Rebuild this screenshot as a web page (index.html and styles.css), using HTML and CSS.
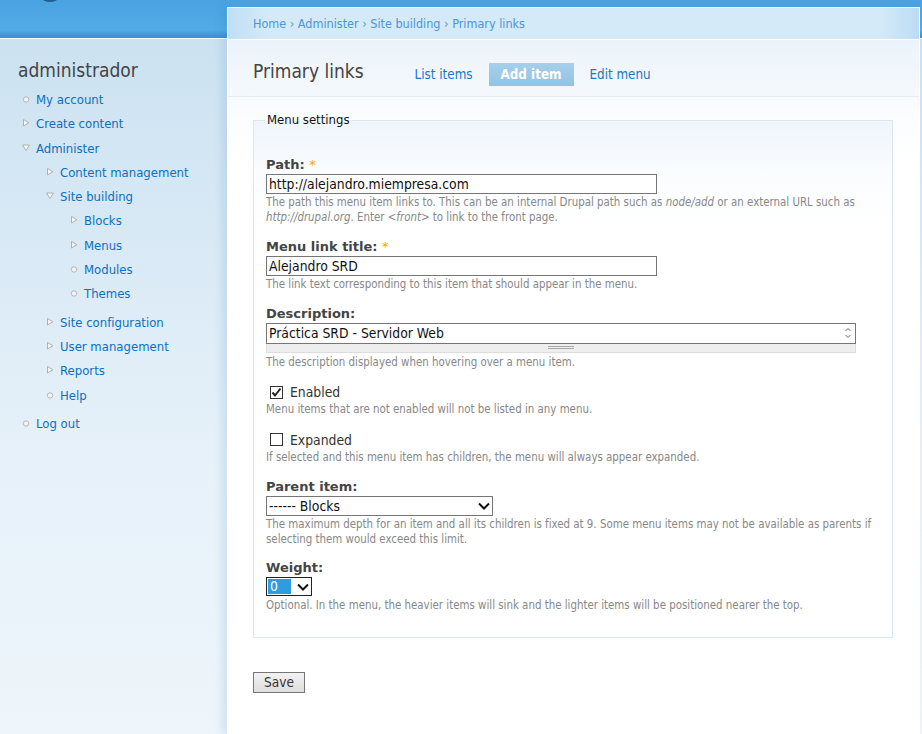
FILE: index.html
```html
<!DOCTYPE html>
<html lang="es">
<head>
<meta charset="utf-8">
<title>Primary links</title>
<link rel="stylesheet" href="styles.css">
</head>
<body>
<div class="logo-bit"></div>
<div class="page">
  <aside class="sidebar">
    <h2 class="user">administrador</h2>
    <ul class="menu">
      <li class="leaf"><a href="#">My account</a></li>
      <li class="collapsed"><a href="#">Create content</a></li>
      <li class="expanded"><a href="#">Administer</a>
        <ul class="menu">
          <li class="collapsed"><a href="#">Content management</a></li>
          <li class="expanded"><a href="#">Site building</a>
            <ul class="menu">
              <li class="collapsed"><a href="#">Blocks</a></li>
              <li class="collapsed"><a href="#">Menus</a></li>
              <li class="leaf"><a href="#">Modules</a></li>
              <li class="leaf"><a href="#">Themes</a></li>
            </ul>
          </li>
          <li class="collapsed"><a href="#">Site configuration</a></li>
          <li class="collapsed"><a href="#">User management</a></li>
          <li class="collapsed"><a href="#">Reports</a></li>
          <li class="leaf"><a href="#">Help</a></li>
        </ul>
      </li>
      <li class="leaf"><a href="#">Log out</a></li>
    </ul>
  </aside>
  <main class="panel">
    <div class="breadcrumb"><a href="#">Home</a> › <a href="#">Administer</a> › <a href="#">Site building</a> › <a href="#">Primary links</a></div>
    <div class="titlebar">
      <h1 class="title">Primary links</h1>
      <ul class="tabs">
        <li><a href="#">List items</a></li>
        <li class="active"><a href="#">Add item</a></li>
        <li><a href="#">Edit menu</a></li>
      </ul>
    </div>
    <div class="content">
      <fieldset class="settings">
        <legend>Menu settings</legend>
        <div class="item">
          <label class="lbl">Path: <span class="req">*</span></label>
          <div class="textfield w390">http://alejandro.miempresa.com</div>
          <div class="desc">The path this menu item links to. This can be an internal Drupal path such as <em>node/add</em> or an external URL such as <em>http://drupal.org</em>. Enter <em>&lt;front&gt;</em> to link to the front page.</div>
        </div>
        <div class="item linktitle">
          <label class="lbl">Menu link title: <span class="req">*</span></label>
          <div class="textfield w390">Alejandro SRD</div>
          <div class="desc">The link text corresponding to this item that should appear in the menu.</div>
        </div>
        <div class="item">
          <label class="lbl">Description:</label>
          <div class="textarea">
            <div class="ta-body"><span>Práctica SRD - Servidor Web</span>
              <svg class="ta-scroll" width="8" height="16" viewBox="0 0 8 16"><path d="M1.5 6 L4 3.5 L6.5 6" fill="none" stroke="#666" stroke-width="1"/><path d="M1.5 10 L4 12.5 L6.5 10" fill="none" stroke="#666" stroke-width="1"/></svg>
            </div>
            <div class="grippie"><span class="grip"></span></div>
          </div>
          <div class="desc">The description displayed when hovering over a menu item.</div>
        </div>
        <div class="item check">
          <div class="cbrow"><span class="cb"><svg width="13" height="13" viewBox="0 0 13 13"><path d="M2.5 6.5 L5 9.5 L10.5 2.5" fill="none" stroke="#222" stroke-width="2"/></svg></span>Enabled</div>
          <div class="desc">Menu items that are not enabled will not be listed in any menu.</div>
        </div>
        <div class="item check">
          <div class="cbrow"><span class="cb"></span>Expanded</div>
          <div class="desc">If selected and this menu item has children, the menu will always appear expanded.</div>
        </div>
        <div class="item parent">
          <label class="lbl">Parent item:</label>
          <div class="select w226"><span>------ Blocks</span><svg width="12" height="8" viewBox="0 0 12 8"><path d="M1 1.5 L6 6.5 L11 1.5" fill="none" stroke="#111" stroke-width="2"/></svg></div>
          <div class="desc">The maximum depth for an item and all its children is fixed at 9. Some menu items may not be available as parents if selecting them would exceed this limit.</div>
        </div>
        <div class="item">
          <label class="lbl">Weight:</label>
          <div class="select weight"><span class="sel">0</span><svg width="12" height="8" viewBox="0 0 12 8"><path d="M1 1.5 L6 6.5 L11 1.5" fill="none" stroke="#111" stroke-width="2"/></svg></div>
          <div class="desc">Optional. In the menu, the heavier items will sink and the lighter items will be positioned nearer the top.</div>
        </div>
      </fieldset>
      <button class="save" type="button">Save</button>
    </div>
  </main>
</div>
</body>
</html>
```

FILE: styles.css
```css
html, body {
  margin: 0;
  padding: 0;
  height: 100%;
}
body {
  font-family: "DejaVu Sans Condensed", "DejaVu Sans", sans-serif;
  background:
    linear-gradient(to bottom, #4aa3e1 0, #52abe6 30px, #3d93da 36px, #3a8fd8 38px, #ffffff 38px, #ffffff 39px, transparent 39px),
    linear-gradient(to bottom, #c9e0f0 0, #d6e8f5 200px, #e6f1f9 450px, #eef5fb 734px);
  overflow: hidden;
  position: relative;
}
a { text-decoration: none; color: #0d6fbe; }

.logo-bit {
  position: absolute;
  left: 42px;
  top: -6px;
  width: 16px;
  height: 8px;
  border-radius: 50%;
  background: #1f5f94;
}

.page {
  display: flex;
  align-items: stretch;
  height: 734px;
}

.sidebar {
  width: 227px;
  flex: none;
  padding-top: 57px;
  box-sizing: border-box;
}
.user {
  margin: 0 0 5px 18px;
  font-size: 19px;
  font-weight: normal;
  color: #444;
  line-height: 26px;
}
.menu {
  list-style: none;
  margin: 0;
  padding: 0 0 0 36px;
}
.menu .menu { padding-left: 24px; padding-bottom: 4px; }
.menu li {
  position: relative;
  font-size: 13px;
  line-height: 24.3px;
}
.menu li::before {
  content: "";
  position: absolute;
  left: -14px;
  top: 8px;
  width: 8px;
  height: 8px;
  background-repeat: no-repeat;
}
.menu li.leaf::before {
  background-image: url("data:image/svg+xml,%3Csvg xmlns='http://www.w3.org/2000/svg' width='8' height='8'%3E%3Ccircle cx='4' cy='3.5' r='2.7' fill='%23f4f4f4' stroke='%23b5b5b5' stroke-width='1'/%3E%3C/svg%3E");
}
.menu li.collapsed::before {
  background-image: url("data:image/svg+xml,%3Csvg xmlns='http://www.w3.org/2000/svg' width='8' height='8'%3E%3Cpath d='M1.5 0.5 L7 3.8 L1.5 7 Z' fill='%23fafafa' stroke='%23b0b0b0' stroke-width='1'/%3E%3C/svg%3E");
  top: 7px;
}
.menu li.expanded::before {
  background-image: url("data:image/svg+xml,%3Csvg xmlns='http://www.w3.org/2000/svg' width='8' height='8'%3E%3Cpath d='M0.5 1 L7.5 1 L4 6.5 Z' fill='%23fafafa' stroke='%23b0b0b0' stroke-width='1'/%3E%3C/svg%3E");
  top: 7px;
}

.panel {
  flex: 1;
  margin-top: 7px;
  margin-right: 2px;
  background: #fff;
  border-left: 1px solid #fff;
  border-top: 1px solid #fff;
  border-right: 1px solid #fff;
  box-shadow: -5px 0 8px rgba(40, 100, 160, 0.13);
  display: flex;
  flex-direction: column;
  min-width: 0;
}
.breadcrumb {
  height: 31px;
  box-sizing: border-box;
  padding-left: 25px;
  font-size: 12.5px;
  line-height: 31px;
  color: #5a9ad6;
  background: linear-gradient(to right, #bfdff5 0, #d5eaf8 40px, #d5eaf8 calc(100% - 40px), #bcdcf4 100%);
}
.breadcrumb a { color: #4d94d6; }

.titlebar {
  height: 58px;
  box-sizing: border-box;
  border-top: 1px solid #fff;
  border-bottom: 1px solid #e4ecf2;
  background: linear-gradient(to bottom, #ebf3fa 0, #f5f9fd 100%);
  display: flex;
  align-items: flex-start;
  padding-left: 25px;
}
.title {
  margin: 18px 0 0 0;
  font-size: 19px;
  font-weight: normal;
  color: #444;
  line-height: 26px;
}
.tabs {
  list-style: none;
  margin: 23px 0 0 51px;
  padding: 0;
  display: flex;
  gap: 16px;
}
.tabs li a {
  display: block;
  font-size: 13.3px;
  line-height: 23px;
  color: #1a78c6;
}
.tabs li.active a {
  padding: 0 12px;
  color: #fff;
  font-weight: bold;
  background: linear-gradient(to bottom, #a5d0ec, #93c3e3);
}

.content {
  flex: 1;
  background: linear-gradient(to bottom, #f8fbfe 0, #ffffff 60px);
  padding: 15px 26px 0 25px;
}
.settings {
  margin: 0;
  padding: 28px 12px 24px 12px;
  border: 1px solid #dae7f2;
  background: linear-gradient(to bottom, #eef5fb 0, #fafcfe 50px, #ffffff 100px);
}
.settings legend {
  font-size: 13px;
  color: #111;
  padding: 0 2px;
  margin-left: -1px;
  line-height: 16px;
}
.item { margin-bottom: 14px; }
.item:last-child { margin-bottom: 0; }
.item.linktitle { margin-bottom: 13px; }
.item.check { margin-top: 9px; }
.item.parent { margin-bottom: 13px; }
.lbl {
  display: block;
  font-family: "DejaVu Sans", sans-serif;
  font-size: 13px;
  font-weight: bold;
  color: #444;
  line-height: 17px;
  margin-bottom: 1px;
}
.req { color: #f5a700; font-weight: normal; }
.textfield {
  box-sizing: border-box;
  height: 20px;
  border: 1px solid #767676;
  background: #fff;
  font-size: 13.8px;
  line-height: 18px;
  padding-left: 2px;
  color: #111;
}
.w390 { width: 391px; }
.desc {
  font-size: 11.4px;
  color: #888;
  line-height: 14.5px;
  margin-top: 1px;
}
.desc em { font-style: italic; line-height: 14px; }
.textarea + .desc { margin-top: 2px; }
.weight + .desc { margin-top: 2px; }

.textarea { width: 590px; }
.ta-body {
  box-sizing: border-box;
  height: 21px;
  border: 1px solid #767676;
  background: #fff;
  font-size: 13.8px;
  line-height: 19px;
  padding-left: 2px;
  color: #111;
  display: flex;
  justify-content: space-between;
  align-items: center;
}
.ta-scroll { margin-right: 3px; }
.grippie {
  height: 8px;
  background: #eee;
  border: 1px solid #ddd;
  border-top: none;
  display: flex;
  justify-content: center;
  align-items: center;
}
.grip {
  width: 26px;
  height: 3px;
  border-top: 1px solid #aaa;
  border-bottom: 1px solid #aaa;
  box-sizing: border-box;
}

.cbrow {
  display: flex;
  align-items: center;
  font-size: 13.8px;
  color: #333;
  line-height: 18px;
  height: 18px;
}
.cb {
  width: 13px;
  height: 13px;
  box-sizing: border-box;
  border: 1px solid #333;
  background: #fff;
  margin: 0 7px 0 4px;
  display: inline-flex;
  align-items: center;
  justify-content: center;
}
.cb svg { display: block; margin: -1px; }

.select {
  box-sizing: border-box;
  height: 20px;
  border: 1px solid #767676;
  background: #fff;
  display: flex;
  align-items: center;
  justify-content: space-between;
  padding: 0 2px 0 2px;
  font-size: 13.8px;
  color: #111;
}
.w226 { width: 227px; }
.weight {
  width: 46px;
  height: 19px;
  border: 1px solid #222;
  padding: 1px 2px 1px 1px;
}
.weight .sel {
  background: #2d9ce0;
  color: #fff;
  height: 100%;
  width: 23px;
  line-height: 15px;
  padding-left: 2px;
  box-sizing: border-box;
}

.save {
  margin-top: 34px;
  font-family: "DejaVu Sans Condensed", "DejaVu Sans", sans-serif;
  font-size: 13.5px;
  color: #333;
  width: 52px;
  height: 21px;
  padding: 0;
  border: 1px solid #767676;
  background: linear-gradient(to bottom, #f2f2f2, #dedede);
  border-radius: 0;
}
```
